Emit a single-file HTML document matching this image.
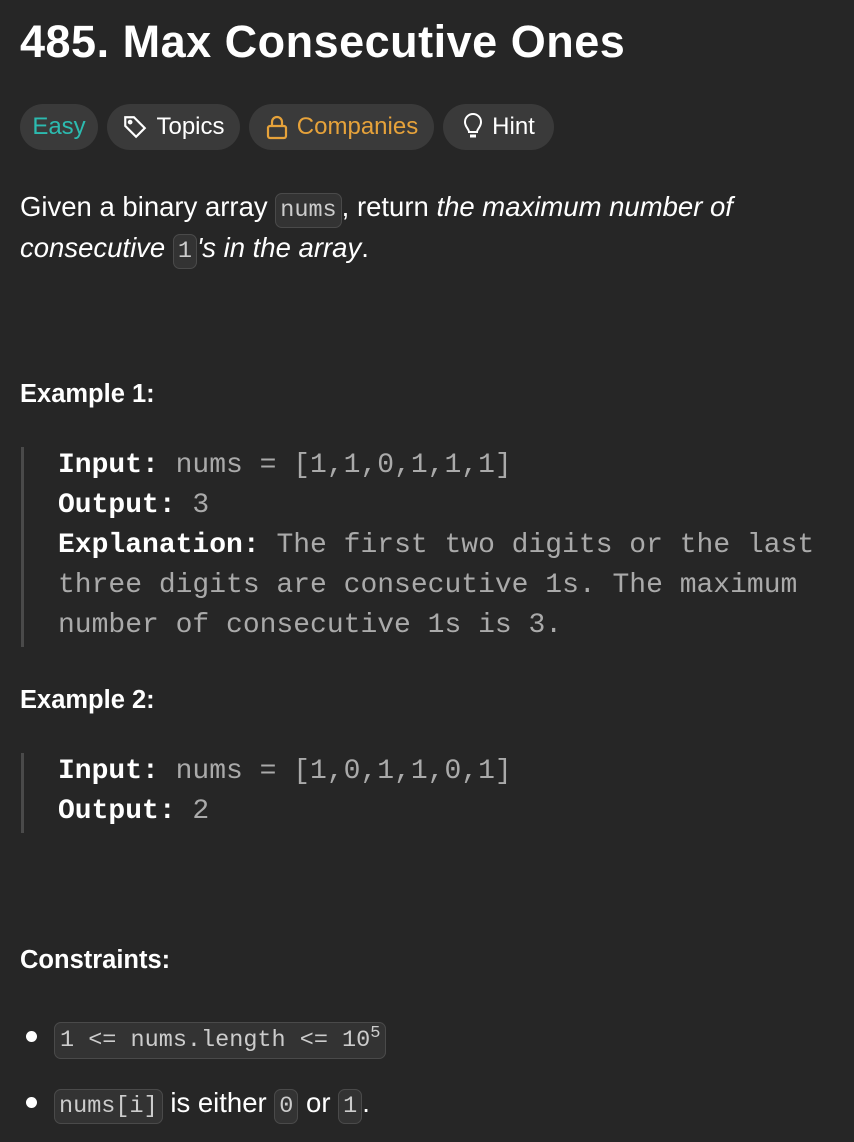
<!DOCTYPE html>
<html><head><meta charset="utf-8"><style>
body{margin:0;width:854px;height:1142px;background:#262626;color:#fff;font-family:"Liberation Sans",sans-serif;position:relative;overflow:hidden}
.a{position:absolute;white-space:nowrap}
h1{position:absolute;left:20px;top:14px;margin:0;font-size:45px;font-weight:bold;line-height:56px;letter-spacing:0.5px}
.chip{position:absolute;top:104px;height:46px;border-radius:23px;background:#3a3a3a;font-size:24px;line-height:46px;display:flex;align-items:center;justify-content:center;gap:8px}
.p{font-size:27.5px;line-height:41px}
.c{font-family:"Liberation Mono",monospace;font-size:23.5px;background:#333;border:1.5px solid #4a4a4a;border-radius:7px;padding:3px 4px;color:#ccc}
.h{font-size:25.5px;font-weight:bold}
.pre{font-family:"Liberation Mono",monospace;font-size:28px;line-height:40px;color:#aaa}
.pre b{color:#fff}
.bar{position:absolute;left:21px;width:3px;background:#4a4a4a}
.dot{position:absolute;left:26px;width:11px;height:11px;border-radius:50%;background:#fff}
</style></head><body>
<h1>485. Max Consecutive Ones</h1>
<div class="chip" style="left:20px;width:78px;color:#2cbbb0">Easy</div>
<div class="chip" style="left:107px;width:133px"><svg width="26" height="26" viewBox="0 0 24 24" fill="none" stroke="#fff" stroke-width="2"><path d="M3 3h8l10 10-8 8L3 11z"/><circle cx="7.5" cy="7.5" r="1.2"/></svg>Topics</div>
<div class="chip" style="left:249px;width:185px;color:#e6a23a"><svg width="24" height="26" viewBox="0 0 24 26" fill="none" stroke="#e6a23a" stroke-width="2.2"><rect x="3" y="12" width="18" height="12" rx="2"/><path d="M7 12V8a5 5 0 0110 0v4"/></svg>Companies</div>
<div class="chip" style="left:443px;width:111px"><svg width="22" height="28" viewBox="0 0 22 28" fill="none" stroke="#fff" stroke-width="2"><path d="M7 19c0-3-4-5-4-10a8 8 0 0116 0c0 5-4 7-4 10z"/><path d="M8 23h6" stroke-width="3"/></svg>Hint</div>
<div class="a p" style="left:20px;top:186px">Given a binary array <span class="c">nums</span>, return <i>the maximum number of</i></div>
<div class="a p" style="left:20px;top:227px"><i>consecutive <span class="c" style="font-style:normal">1</span>'s in the array</i>.</div>
<div class="a h" style="left:20px;top:380px">Example 1:</div>
<div class="bar" style="top:447px;height:200px"></div>
<div class="a pre" style="left:58px;top:446px"><b>Input:</b> nums = [1,1,0,1,1,1]<br><b>Output:</b> 3<br><b>Explanation:</b> The first two digits or the last<br>three digits are consecutive 1s. The maximum<br>number of consecutive 1s is 3.</div>
<div class="a h" style="left:20px;top:686px">Example 2:</div>
<div class="bar" style="top:753px;height:80px"></div>
<div class="a pre" style="left:58px;top:752px"><b>Input:</b> nums = [1,0,1,1,0,1]<br><b>Output:</b> 2</div>
<div class="a h" style="left:20px;top:946px">Constraints:</div>
<div class="dot" style="top:1031px"></div>
<div class="a p" style="left:54px;top:1016px"><span class="c" style="padding:4px 5px">1 &lt;= nums.length &lt;= 10<sup style="font-size:17px;line-height:0">5</sup></span></div>
<div class="dot" style="top:1097px"></div>
<div class="a p" style="left:54px;top:1082px"><span class="c">nums[i]</span> is either <span class="c">0</span> or <span class="c">1</span>.</div>
</body></html>
